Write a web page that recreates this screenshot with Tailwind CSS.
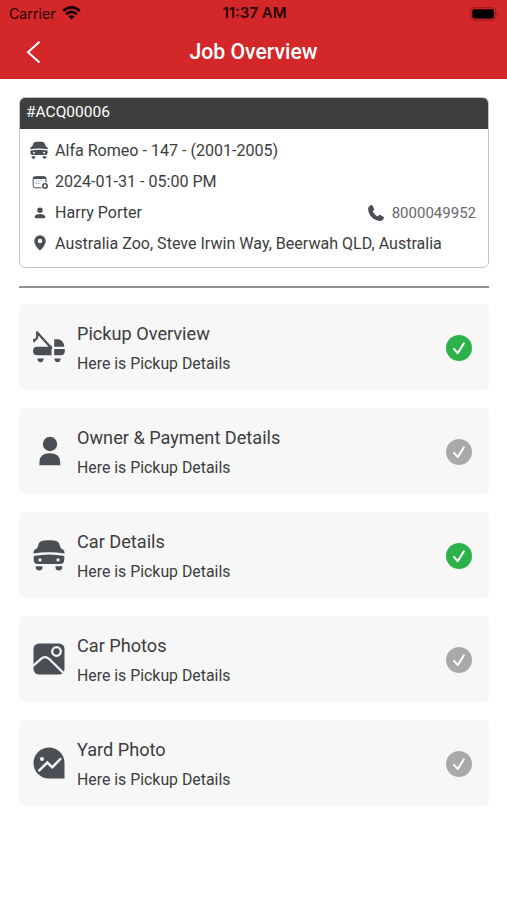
<!DOCTYPE html>
<html lang="en">
<head>
<meta charset="utf-8">
<title>Job Overview</title>
<script src="https://cdn.jsdelivr.net/npm/@tailwindcss/browser@4"></script>
</head>
<body class="min-h-screen bg-white font-[Roboto,sans-serif] text-[#3c3d40]">
<svg class="hidden">
  <symbol id="car" viewBox="0 0 32 32">
    <path d="M.5 14.500C.4 12 1.300 10.800 2.700 10.300 4.300 9.500 4.800 8 5.500 5.500 6.400 2.200 8.500 1.200 16 1.200S25.600 2.200 26.500 5.500c.7 2.500 1.200 4 2.800 4.800 1.400.5 2.300 1.700 2.200 4.200Q16 11.800.5 14.500Z"/>
    <path fill-rule="evenodd" d="M.7 17Q16 14 31.300 17v3.500c0 3-1.600 4.500-4 4.500H4.700c-2.400 0-4-1.500-4-4.500ZM7 19.300a1.600 1.600 0 1 0 0 3.200 1.600 1.600 0 0 0 0-3.200Zm18 0a1.600 1.600 0 1 0 0 3.200 1.600 1.600 0 0 0 0-3.200Z"/>
    <path d="M2.800 27.200h6.700v1.200c0 2-1.400 3-3.300 3s-3.400-1-3.400-3ZM22.500 27.200h6.700v1.200c0 2-1.500 3-3.400 3s-3.300-1-3.300-3Z"/>
  </symbol>
  <symbol id="check" viewBox="0 0 26 26">
    <circle cx="13" cy="13" r="13"/>
    <path d="M8 13.800l3.700 4.400 6.100-9.800" fill="none" stroke="#fff" stroke-width="2" stroke-linecap="round" stroke-linejoin="round"/>
  </symbol>
</svg>

<header class="h-[79px] bg-[#d32729]">
  <div class="grid h-[27px] grid-cols-3 items-center pl-[9px] pr-[7px] font-[Inter,sans-serif] text-[#260506]">
    <div class="flex items-center gap-[6px] text-[14.200px]"><span>Carrier</span>
      <svg class="h-[14px] w-[19px]" viewBox="0 0 19 14" fill="none" stroke="#160303" stroke-width="2.700"><path d="M1.200 5Q9.500-2.200 17.800 5M4.200 8.200Q9.500 3.700 14.800 8.200"/><path d="M9.500 13.500L6.500 10.500Q9.500 8 12.500 10.500Z" fill="#160303" stroke="none"/></svg>
    </div>
    <div class="whitespace-nowrap text-center text-[15px] font-semibold">11:37 AM</div>
    <svg class="h-[14px] w-[30px] justify-self-end" viewBox="0 0 30 14"><rect x=".7" y=".7" width="25" height="12.400" rx="3.500" fill="none" stroke="#951b1d"/><rect x="2.300" y="2.300" width="21.700" height="9.200" rx="2" fill="#000"/><path d="M27.200 5v4q2.200-2 0-4Z" fill="#951b1d"/></svg>
  </div>
  <div class="grid h-[50px] grid-cols-[50px_1fr_50px] items-center">
    <svg class="ml-[26px] h-[24px] w-[15px]" viewBox="0 0 15 24" fill="none" stroke="#fff" stroke-width="2"><path d="M13.500 1.700L2 12.200l11.500 10.300"/></svg>
    <h1 class="text-center text-[21.200px] font-medium text-white">Job Overview</h1>
  </div>
</header>

<main class="pl-[19px] pr-[18px] pt-[18px]">
  <section class="h-[171px] overflow-hidden rounded-[6px] border border-[#c4c4c4]">
    <div class="-mx-px -mt-px flex h-[32px] items-center bg-[#3d3f3e] pl-[7px] text-[15.500px] text-white">#ACQ00006</div>
    <div class="flex flex-col pl-[10px] pr-[12px] pt-[7px] text-[16.070px]">
      <div class="flex h-[31px] items-center"><svg class="mr-[7px] h-[18px] w-[18px] -translate-y-[2px]" fill="#494f54"><use href="#car"/></svg><span>Alfa Romeo - 147 - (2001-2005)</span></div>
      <div class="flex h-[31px] items-center"><svg class="ml-[2px] mr-[6px] h-[15px] w-[17px]" viewBox="0 0 17 15" fill="none" stroke="#494f54"><path d="M9.500 12.800H3.300Q1.200 12.800 1.200 10.700V3.700Q1.200 1.600 3.300 1.600H12Q14 1.600 14 3.600V7.500"/><path d="M1 3h13" stroke-width="1.800"/><path d="M3.500 6h8M3.500 8.500h5" stroke="#a4a6a8" stroke-dasharray="1.500 1"/><circle cx="13" cy="11" r="2.200" stroke-width="1.600"/></svg><span>2024-01-31 - 05:00 PM</span></div>
      <div class="flex h-[31px] items-center"><svg class="ml-[4px] mr-[9px] h-[12px] w-[12px] -translate-y-px" viewBox="0 0 12 12" fill="#494f54"><circle cx="6" cy="3.200" r="2.700"/><path d="M.8 11.300V9.500Q2 7.100 6 7.100T11.200 9.500V11.300Z"/></svg><span>Harry Porter</span>
        <svg class="ml-auto mr-[8px] h-[16px] w-[16px] -translate-y-px" viewBox="3 3 18 18" fill="#494f54" preserveAspectRatio="none"><path d="M6.500 3.200C4 4 3 5.700 3.200 8c.7 6.800 6 12.300 13 12.900 2.300.1 3.900-1 4.700-3.200.2-.7 0-1.300-.6-1.600l-3.500-1.900c-.6-.3-1.200-.2-1.600.3l-1.300 1.400c-2.600-1.300-4.500-3.200-5.700-5.800l1.300-1.200c.5-.5.6-1 .3-1.700L8.200 3.900c-.3-.6-.9-.9-1.700-.7Z"/></svg><span class="text-[15px] text-[#66686b]">8000049952</span></div>
      <div class="flex h-[31px] items-center"><svg class="ml-[4px] mr-[9px] h-[16px] w-[12px] -translate-y-[2px]" viewBox="0 0 12 16" fill="#494f54"><path fill-rule="evenodd" d="M6 .3a5.700 5.700 0 0 1 5.700 5.800C11.700 9.500 8.200 14 6 15.500 3.800 14 .3 9.500.3 6.100A5.700 5.700 0 0 1 6 .3Zm0 3.500a2.200 2.200 0 1 0 0 4.400 2.200 2.200 0 0 0 0-4.400Z"/></svg><span class="whitespace-nowrap">Australia Zoo, Steve Irwin Way, Beerwah QLD, Australia</span></div>
    </div>
  </section>
  <div class="mt-[18px] h-[2px] bg-[#929292]"></div>

  <div class="mt-[16px] flex flex-col gap-[18px]">
    <article class="flex h-[86px] items-center rounded-[5px] bg-[#f7f7f7] pl-[14px] pr-[17px]">
      <svg class="h-[32px] w-[32px]" viewBox="0 0 32 32" fill="#494f54"><path d="M1.200 10.300V8.800Q5.200 9 4 1.300L18.300 17" fill="none" stroke="#494f54" stroke-width="2.200" stroke-linecap="round" stroke-linejoin="round"/><path d="M4.500 15.700H16L18.500 14V24.200H4.500Q0 24.200 0 20T4.500 15.700ZM21.200 8.200H25Q30.200 8.200 31.300 15.800H21.200ZM21.200 18H31.800V20Q31.800 24.200 27.500 24.200H21.200ZM4.300 27.500H10.800Q10.300 31.200 7.500 31.200T4.300 27.500ZM21.300 27.500H27.800Q27.300 31.200 24.500 31.200T21.300 27.500Z"/></svg>
      <div class="ml-[12px] flex-1 pt-[3px]"><h2 class="text-[18.150px] leading-[30px]">Pickup Overview</h2><p class="text-[15.850px] leading-[30px]">Here is Pickup Details</p></div>
      <svg class="mt-[2px] h-[26px] w-[26px]" fill="#2db14a"><use href="#check"/></svg>
    </article>
    <article class="flex h-[86px] items-center rounded-[5px] bg-[#f7f7f7] pl-[14px] pr-[17px]">
      <svg class="h-[32px] w-[32px]" viewBox="0 0 32 32" fill="#494f54"><circle cx="17" cy="9" r="7.200"/><path d="M6.400 30.200V27Q6.400 18.300 16.800 18.300T27.200 27V30.200Z"/></svg>
      <div class="ml-[12px] flex-1 pt-[3px]"><h2 class="text-[18.150px] leading-[30px]">Owner &amp; Payment Details</h2><p class="text-[15.850px] leading-[30px]">Here is Pickup Details</p></div>
      <svg class="mt-[2px] h-[26px] w-[26px]" fill="#a9a9a9"><use href="#check"/></svg>
    </article>
    <article class="flex h-[86px] items-center rounded-[5px] bg-[#f7f7f7] pl-[14px] pr-[17px]">
      <svg class="h-[32px] w-[32px]" fill="#494f54"><use href="#car"/></svg>
      <div class="ml-[12px] flex-1 pt-[3px]"><h2 class="text-[18.150px] leading-[30px]">Car Details</h2><p class="text-[15.850px] leading-[30px]">Here is Pickup Details</p></div>
      <svg class="mt-[2px] h-[26px] w-[26px]" fill="#2db14a"><use href="#check"/></svg>
    </article>
    <article class="flex h-[86px] items-center rounded-[5px] bg-[#f7f7f7] pl-[14px] pr-[17px]">
      <svg class="h-[32px] w-[32px]" viewBox="0 0 32 32"><rect x=".5" y=".5" width="31" height="31" rx="5.500" fill="#494f54"/><g fill="none" stroke="#f7f7f7" stroke-width="2.300"><circle cx="23.500" cy="8.500" r="4.300"/><path d="M0 23L8 15.800Q12 12.500 16 15.800L30.500 30"/></g></svg>
      <div class="ml-[12px] flex-1 pt-[3px]"><h2 class="text-[18.150px] leading-[30px]">Car Photos</h2><p class="text-[15.850px] leading-[30px]">Here is Pickup Details</p></div>
      <svg class="mt-[2px] h-[26px] w-[26px]" fill="#a9a9a9"><use href="#check"/></svg>
    </article>
    <article class="flex h-[86px] items-center rounded-[5px] bg-[#f7f7f7] pl-[14px] pr-[17px]">
      <svg class="h-[32px] w-[32px]" viewBox="0 0 32 32"><path d="M16 .5A15.500 15.500 0 0 1 31.500 16V31.500H16A15.500 15.500 0 0 1 16 .5Z" fill="#494f54"/><circle cx="9" cy="12" r="2" fill="#f7f7f7"/><path d="M6.300 23.300L14.300 15.500L19.300 20.300L27.300 12" fill="none" stroke="#f7f7f7" stroke-width="2.500" stroke-linecap="round"/></svg>
      <div class="ml-[12px] flex-1 pt-[3px]"><h2 class="text-[18.150px] leading-[30px]">Yard Photo</h2><p class="text-[15.850px] leading-[30px]">Here is Pickup Details</p></div>
      <svg class="mt-[2px] h-[26px] w-[26px]" fill="#a9a9a9"><use href="#check"/></svg>
    </article>
  </div>
</main>
</body>
</html>
